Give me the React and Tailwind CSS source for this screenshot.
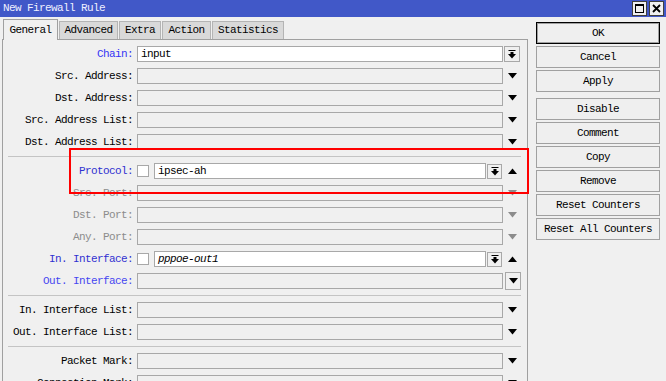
import React from "react";

const FONT = { fontFamily: '"Liberation Mono", "DejaVu Sans Mono", monospace' };

function Down({ color = "#000" }) {
  return (
    <svg width="9" height="6" viewBox="0 0 9 6">
      <polygon points="0,0 9,0 4.5,5.5" fill={color} />
    </svg>
  );
}
function Up({ color = "#000" }) {
  return (
    <svg width="9" height="6" viewBox="0 0 9 6">
      <polygon points="0,6 9,6 4.5,0.5" fill={color} />
    </svg>
  );
}
function DropBtn({ w = "w-[15px]", h = "h-[16px]" }) {
  return (
    <div className={`${w} ${h} border border-[#a8a8a8] bg-[#f0f0f0] flex items-center justify-center`}>
      <svg width="8" height="9" viewBox="0 0 8 9">
        <rect x="0.5" y="0" width="7" height="1" fill="#000" />
        <rect x="2.5" y="2" width="3" height="3" fill="#000" />
        <polygon points="0,4 8,4 4,8.5" fill="#000" />
      </svg>
    </div>
  );
}

function Label({ text, color = "text-black" }) {
  return (
    <div className={`w-[130px] shrink-0 text-right whitespace-pre ${color}`}>{text}</div>
  );
}

function DisabledRow({ label, color, arrow = "#000" }) {
  return (
    <div className="h-[22px] shrink-0 flex items-center">
      <Label text={label} color={color} />
      <div className="ml-[4px] w-[366px] h-[16px] border border-[#a8a8a8] bg-[#f0f0f0]" />
      <div className="ml-[1px] w-[16px] flex items-center justify-center">
        <Down color={arrow} />
      </div>
    </div>
  );
}

function CheckRow({ label, color, value, italic }) {
  return (
    <div className="h-[22px] shrink-0 flex items-center">
      <Label text={label} color={color} />
      <div className="ml-[4px] w-[12px] h-[12px] border border-[#a8a8a8] bg-white" />
      <div className={`ml-[5px] w-[332px] h-[16px] border border-[#a8a8a8] bg-white pl-[3px] flex items-center leading-none ${italic ? "italic" : ""}`}>
        {value}
      </div>
      <div className="ml-[1px]">
        <DropBtn w="w-[15px]" h="h-[15px]" />
      </div>
      <div className="ml-[2px] w-[16px] flex items-center justify-center">
        <Up />
      </div>
    </div>
  );
}

function Sep() {
  return (
    <div className="h-[7px] shrink-0 flex items-center">
      <div className="ml-[5px] w-[513px] border-t border-[#c4c4c4]" />
    </div>
  );
}

function Btn({ children, ok }) {
  return (
    <div
      className={`h-[22px] w-[124px] flex items-center justify-center bg-[#efefef] text-black ${
        ok ? "border border-black shadow-[inset_0_0_0_1px_#a0a0a0]" : "border border-[#a0a0a0]"
      }`}
    >
      {children}
    </div>
  );
}

export default function App() {
  const tabs = [
    { t: "General", w: "w-[55px]" },
    { t: "Advanced", w: "w-[59px]" },
    { t: "Extra", w: "w-[42px]" },
    { t: "Action", w: "w-[49px]" },
    { t: "Statistics", w: "w-[72px]" },
  ];
  return (
    <div
      className="w-[666px] h-[381px] bg-[#f0f0f0] overflow-hidden relative text-[11px] tracking-[-0.6px]"
      style={FONT}
    >
      {/* title bar */}
      <div className="h-[17px] bg-[#4158c8] flex items-center pl-[3px] pr-[2px]">
        <span className="text-[#f0f0ff]">New Firewall Rule</span>
        <div className="ml-auto flex gap-[2px] items-center">
          <div className="w-[15px] h-[15px] bg-[#f0f0f0] border border-[#404040] flex items-center justify-center">
            <div className="w-[9px] h-[9px] border border-black border-t-2" />
          </div>
          <div className="w-[15px] h-[15px] bg-[#f0f0f0] border border-[#404040] flex items-center justify-center">
            <svg width="9" height="9" viewBox="0 0 9 9">
              <path d="M1 1 L8 8 M8 1 L1 8" stroke="#000" strokeWidth="1.8" />
            </svg>
          </div>
        </div>
      </div>

      <div className="flex h-[364px]">
        {/* left column */}
        <div className="w-[528px] flex flex-col">
          <div className="h-[22px] shrink-0 pl-[3px] flex items-end gap-[1px] relative z-10">
            {tabs.map((tb, i) =>
              i === 0 ? (
                <div
                  key={tb.t}
                  className={`${tb.w} h-[21px] -mb-[1px] bg-[#f0f0f0] border-t border-l border-r border-[#a0a0a0] flex items-center justify-center text-black`}
                >
                  {tb.t}
                </div>
              ) : (
                <div
                  key={tb.t}
                  className={`${tb.w} h-[18px] bg-[#d9d9d9] border-t border-l border-r border-[#b4b4b4] flex items-center justify-center text-black`}
                >
                  {tb.t}
                </div>
              )
            )}
          </div>
          <div className="ml-[2px] w-[526px] flex-1 min-h-0 overflow-hidden border-l border-r border-t border-[#a0a0a0] pt-[3px] flex flex-col">
            <div className="h-[22px] shrink-0 flex items-center">
              <Label text="Chain:" color="text-[#3535f5]" />
              <div className="ml-[4px] w-[366px] h-[16px] border border-[#a8a8a8] bg-white pl-[3px] flex items-center leading-none">
                input
              </div>
              <div className="ml-[1px]">
                <DropBtn w="w-[16px]" h="h-[16px]" />
              </div>
            </div>
            <DisabledRow label="Src. Address:" />
            <DisabledRow label="Dst. Address:" />
            <DisabledRow label="Src. Address List:" />
            <DisabledRow label="Dst. Address List:" />
            <Sep />
            <CheckRow label="Protocol:" color="text-[#3030d0]" value="ipsec-ah" />
            <DisabledRow label="Src. Port:" color="text-[#8c8c8c]" arrow="#8c8c8c" />
            <DisabledRow label="Dst. Port:" color="text-[#8c8c8c]" arrow="#8c8c8c" />
            <DisabledRow label="Any. Port:" color="text-[#8c8c8c]" arrow="#8c8c8c" />
            <CheckRow label="In. Interface:" color="text-[#3030d0]" value="pppoe-out1" italic />
            <div className="h-[22px] shrink-0 flex items-center">
              <Label text="Out. Interface:" color="text-[#4646f0]" />
              <div className="ml-[4px] w-[366px] h-[16px] border border-[#a8a8a8] bg-[#f0f0f0]" />
              <div className="ml-[2px] w-[16px] h-[18px] border border-[#a8a8a8] bg-[#f0f0f0] flex items-center justify-center">
                <Down />
              </div>
            </div>
            <Sep />
            <DisabledRow label="In. Interface List:" />
            <DisabledRow label="Out. Interface List:" />
            <Sep />
            <DisabledRow label="Packet Mark:" />
            <DisabledRow label="Connection Mark:" />
          </div>
        </div>

        {/* right column */}
        <div className="ml-[8px] w-[124px] pt-[5px] flex flex-col">
          <div className="flex flex-col gap-[2px]">
            <Btn ok>OK</Btn>
            <Btn>Cancel</Btn>
            <Btn>Apply</Btn>
          </div>
          <div className="flex flex-col gap-[2px] mt-[6px]">
            <Btn>Disable</Btn>
            <Btn>Comment</Btn>
            <Btn>Copy</Btn>
            <Btn>Remove</Btn>
            <Btn>Reset Counters</Btn>
            <Btn>Reset All Counters</Btn>
          </div>
        </div>
      </div>

      {/* red highlight */}
      <div className="absolute left-[69px] top-[148px] w-[460px] h-[46px] border-2 border-[#ff0000] pointer-events-none" />
    </div>
  );
}
